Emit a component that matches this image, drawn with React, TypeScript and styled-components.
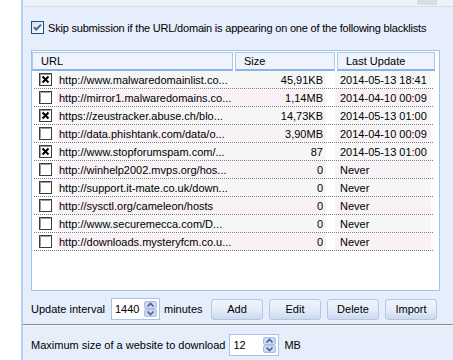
import styled, { createGlobalStyle } from "styled-components";

type Entry = { on: boolean; url: string; size: string; updated: string };

const entries: Entry[] = [
  { on: true, url: "http://www.malwaredomainlist.co...", size: "45,91KB", updated: "2014-05-13 18:41" },
  { on: false, url: "http://mirror1.malwaredomains.co...", size: "1,14MB", updated: "2014-04-10 00:09" },
  { on: true, url: "https://zeustracker.abuse.ch/blo...", size: "14,73KB", updated: "2014-05-13 01:00" },
  { on: false, url: "http://data.phishtank.com/data/o...", size: "3,90MB", updated: "2014-04-10 00:09" },
  { on: true, url: "http://www.stopforumspam.com/...", size: "87", updated: "2014-05-13 01:00" },
  { on: false, url: "http://winhelp2002.mvps.org/hos...", size: "0", updated: "Never" },
  { on: false, url: "http://support.it-mate.co.uk/down...", size: "0", updated: "Never" },
  { on: false, url: "http://sysctl.org/cameleon/hosts", size: "0", updated: "Never" },
  { on: false, url: "http://www.securemecca.com/D...", size: "0", updated: "Never" },
  { on: false, url: "http://downloads.mysteryfcm.co.u...", size: "0", updated: "Never" },
];

const GlobalStyle = createGlobalStyle`
  body {
    margin: 0;
    font-family: "Liberation Sans", Arial, sans-serif;
    font-size: 11px;
    color: #000;
    background: #ffffff;
  }
`;

const XpCheck = () => (
  <svg width="13" height="13" viewBox="0 0 13 13">
    <defs>
      <linearGradient id="xpc" x1="0" y1="0" x2="1" y2="1">
        <stop offset="0" stopColor="#dcdcd7" />
        <stop offset="1" stopColor="#ffffff" />
      </linearGradient>
    </defs>
    <rect x="0.5" y="0.5" width="12" height="12" fill="url(#xpc)" stroke="#1c5180" />
    <path d="M3 6.2 L5.2 8.6 L10 3.6" fill="none" stroke="#2f62bf" strokeWidth="1.9" />
  </svg>
);

const ListCheck = ({ on }: { on: boolean }) => (
  <svg width="13" height="13" viewBox="0 0 13 13">
    <rect x="0.5" y="0.5" width="12" height="12" fill="#fff" stroke="#3c3c3c" />
    <path d="M1.5 11.5 V1.5 H11.5" fill="none" stroke="#9a9a9a" />
    {on && <path d="M3.5 3.5 L9.5 9.5 M9.5 3.5 L3.5 9.5" stroke="#000" strokeWidth="2" />}
  </svg>
);

const SpinArrows = () => (
  <svg width="13" height="16" viewBox="0 0 13 16">
    <rect x="0.5" y="0.5" width="12" height="7" rx="1.5" fill="#c9d9f6" stroke="#aabde4" />
    <rect x="0.5" y="8.5" width="12" height="7" rx="1.5" fill="#c9d9f6" stroke="#aabde4" />
    <path d="M3.5 5.5 L6.5 2.5 L9.5 5.5" fill="none" stroke="#4d6185" strokeWidth="1.6" />
    <path d="M3.5 10.5 L6.5 13.5 L9.5 10.5" fill="none" stroke="#4d6185" strokeWidth="1.6" />
  </svg>
);

const Spinner = ({ value, width }: { value: string; width: number }) => (
  <SpinBox style={{ width }}>
    <SpinValue>{value}</SpinValue>
    <SpinArrows />
  </SpinBox>
);

export default function App() {
  return (
    <>
      <GlobalStyle />
      <Frame>
        <SidePane />
        <Main>
          <TopStrip>
            <StripTab />
          </TopStrip>
          <Group>
            <CheckLine>
              <XpCheck />
              <span>Skip submission if the URL/domain is appearing on one of the following blacklists</span>
            </CheckLine>

            <Table>
              <Header>
                <HeadCell $w={199}>URL</HeadCell>
                <HeadCell $w={98}>Size</HeadCell>
                <HeadCell $w={96}>Last Update</HeadCell>
              </Header>
              <Body>
                {entries.map((e, i) => (
                  <Row key={i}>
                    <CheckCell>
                      <ListCheck on={e.on} />
                    </CheckCell>
                    <UrlCell $alt={i % 2 === 1}>{e.url}</UrlCell>
                    <SizeCell $alt={i % 2 === 1}>{e.size}</SizeCell>
                    <DateCell $alt={i % 2 === 1}>{e.updated}</DateCell>
                  </Row>
                ))}
              </Body>
            </Table>

            <Controls>
              <span>Update interval</span>
              <Gap $w={6} />
              <Spinner value="1440" width={49} />
              <Gap $w={4} />
              <span>minutes</span>
              <Buttons>
                <Button>Add</Button>
                <Button>Edit</Button>
                <Button>Delete</Button>
                <Button>Import</Button>
              </Buttons>
            </Controls>
          </Group>
          <Separator />
          <Group>
            <Controls $top={8}>
              <span>Maximum size of a website to download</span>
              <Gap $w={4} />
              <Spinner value="12" width={50} />
              <Gap $w={5} />
              <span>MB</span>
            </Controls>
          </Group>
        </Main>
      </Frame>
    </>
  );
}

const Frame = styled.div`
  display: flex;
  width: 453px;
  height: 360px;
  overflow: hidden;
`;

const SidePane = styled.div`
  flex: none;
  width: 21px;
  background: #ffffff;
  border-right: 2px solid #b3d1f1;
`;

const Main = styled.div`
  flex: 1;
  min-width: 0;
  overflow: hidden;
  display: flex;
  flex-direction: column;
  background: #e6eefc;
`;

const TopStrip = styled.div`
  height: 6px;
  background: #edf2fb;
  border-bottom: 1px solid #d3e0f3;
  display: flex;
  justify-content: flex-end;
  padding-right: 16px;
`;

const StripTab = styled.div`
  width: 20px;
  height: 5px;
  background: #d9dde4;
`;

const Group = styled.div`
  padding: 0 13px 0 8px;
  display: flex;
  flex-direction: column;
`;

const CheckLine = styled.label`
  display: flex;
  align-items: center;
  gap: 4px;
  margin-top: 14px;
  height: 13px;
  white-space: nowrap;
  letter-spacing: -0.2px;
`;

const Table = styled.div`
  margin-top: 16px;
  width: 409px;
  height: 241px;
  box-sizing: border-box;
  border: 1px solid #9fc3ec;
  background: #ffffff;
  display: flex;
  flex-direction: column;
`;

const Header = styled.div`
  height: 20px;
  display: flex;
  align-items: stretch;
  padding-top: 1px;
  box-sizing: border-box;
`;

const HeadCell = styled.div<{ $w: number }>`
  width: ${({ $w }) => $w - 8}px;
  margin-right: 2px;
  border: 1px solid #a9c9ef;
  border-bottom: 2px solid #8cb3e3;
  background: #eef3fc;
  padding-left: 8px;
  display: flex;
  align-items: center;
  line-height: 1;
`;

const Body = styled.div`
  flex: 1;
  display: flex;
  flex-direction: column;
`;

const Row = styled.div`
  height: 17px;
  margin-left: 2px;
  width: 399px;
  border-bottom: 1px dotted #7c7c7c;
  display: grid;
  grid-template-columns: 23px 175px 94px 9px 96px;
  align-items: stretch;
`;

const CheckCell = styled.div`
  display: flex;
  align-items: center;
  padding-left: 5px;
`;

const Cell = styled.div<{ $alt: boolean }>`
  background: ${({ $alt }) => ($alt ? "#f8f1f5" : "#f6f6f7")};
  display: flex;
  align-items: center;
  white-space: nowrap;
  overflow: hidden;
`;

const UrlCell = styled(Cell)`
  padding-left: 2px;
`;

const SizeCell = styled(Cell)`
  justify-content: flex-end;
  padding-right: 3px;
`;

const DateCell = styled(Cell)`
  grid-column: 5;
  padding-left: 5px;
`;

const Controls = styled.div<{ $top?: number }>`
  margin-top: ${({ $top }) => $top ?? 7}px;
  height: 22px;
  display: flex;
  align-items: center;
  white-space: nowrap;
`;

const Gap = styled.span<{ $w: number }>`
  width: ${({ $w }) => $w}px;
  flex: none;
`;

const SpinBox = styled.div`
  height: 22px;
  box-sizing: border-box;
  border: 1px solid #a7c4e8;
  background: #ffffff;
  display: flex;
  align-items: center;
  padding: 0 2px 0 3px;
`;

const SpinValue = styled.span`
  flex: 1;
`;

const Buttons = styled.div`
  margin-left: auto;
  margin-right: 3px;
  display: flex;
  gap: 6px;
`;

const Button = styled.button`
  width: 52px;
  height: 21px;
  box-sizing: border-box;
  border: 1px solid #b4c6e0;
  border-radius: 3px;
  background: linear-gradient(#f1f5fc, #e3ebf8 55%, #cbd9ef);
  font-family: "Liberation Sans", Arial, sans-serif;
  font-size: 11px;
  color: #000;
  padding: 0;
`;

const Separator = styled.div`
  margin-top: 4px;
  height: 1px;
  background: #8c8c8c;
  border-bottom: 1px solid #f4f7fd;
`;
